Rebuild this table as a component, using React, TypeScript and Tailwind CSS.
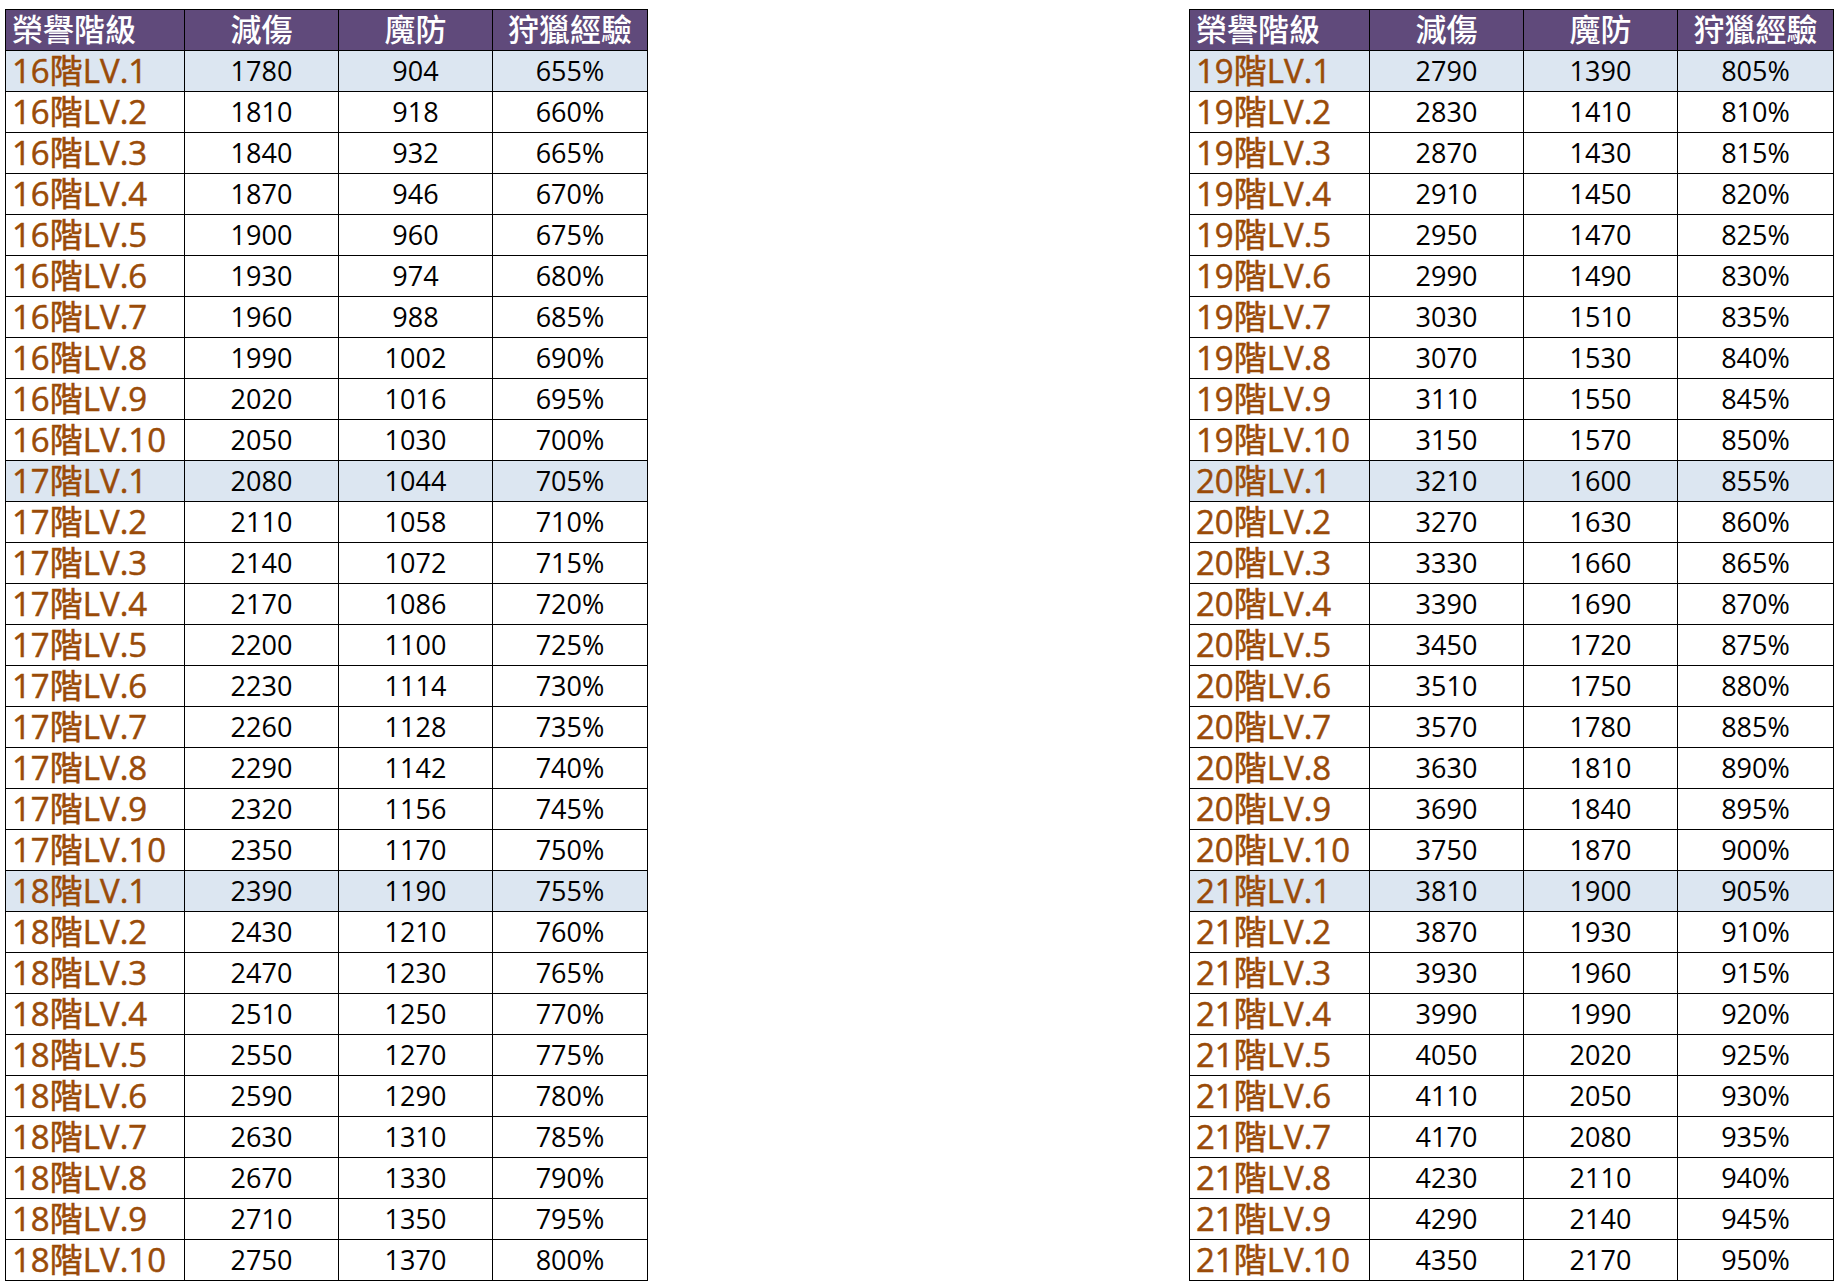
import React from 'react';

type Row = { label: string; dmg: number; mdef: number; exp: number; first: boolean };

// each tier: 10 levels, start values and steps
const buildTier = (tier: number, dmg: number, dmgStep: number, mdef: number, mdefStep: number, exp: number): Row[] =>
  Array.from({ length: 10 }, (_, i) => ({
    label: `${tier}階LV.${i + 1}`,
    dmg: dmg + dmgStep * i,
    mdef: mdef + mdefStep * i,
    exp: exp + 5 * i,
    first: i === 0,
  }));

const leftRows: Row[] = [
  ...buildTier(16, 1780, 30, 904, 14, 655),
  ...buildTier(17, 2080, 30, 1044, 14, 705),
  ...buildTier(18, 2390, 40, 1190, 20, 755),
];

const rightRows: Row[] = [
  ...buildTier(19, 2790, 40, 1390, 20, 805),
  ...buildTier(20, 3210, 60, 1600, 30, 855),
  ...buildTier(21, 3810, 60, 1900, 30, 905),
];

const font = { fontFamily: '"Open Sans", "Noto Sans CJK TC", sans-serif' };

const RankTable: React.FC<{ rows: Row[]; cols: string }> = ({ rows, cols }) => (
  <div className={`grid ${cols} auto-rows-[40px] gap-px bg-black border border-black`} style={font}>
    <div className="bg-[#604a7b] text-white text-[31px] font-medium flex items-center pl-[6px] pb-[2px] leading-none">榮譽階級</div>
    <div className="bg-[#604a7b] text-white text-[31px] font-medium flex items-center justify-center pb-[2px] leading-none">減傷</div>
    <div className="bg-[#604a7b] text-white text-[31px] font-medium flex items-center justify-center pb-[2px] leading-none">魔防</div>
    <div className="bg-[#604a7b] text-white text-[31px] font-medium flex items-center justify-center pb-[2px] leading-none">狩獵經驗</div>
    {rows.map((r) => {
      const bg = r.first ? 'bg-[#dce6f1]' : 'bg-white';
      return (
        <React.Fragment key={r.label}>
          <div className={`${bg} text-[#9a4b08] text-[33px] [-webkit-text-stroke:0.5px_#9a4b08] flex items-center pl-[6px] pb-[2px] leading-none whitespace-nowrap`}>
            {r.label}
          </div>
          <div className={`${bg} text-black text-[27px] flex items-center justify-center pb-[2px] leading-none`}>{r.dmg}</div>
          <div className={`${bg} text-black text-[27px] flex items-center justify-center pb-[2px] leading-none`}>{r.mdef}</div>
          <div className={`${bg} text-black text-[27px] flex items-center justify-center pb-[2px] leading-none`}>{r.exp}%</div>
        </React.Fragment>
      );
    })}
  </div>
);

export default function App() {
  return (
    <div className="w-[1838px] h-[1283px] bg-white flex items-start pl-[5px] pt-[9px] gap-[541px]">
      <RankTable rows={leftRows} cols="grid-cols-[178px_153px_153px_154px]" />
      <RankTable rows={rightRows} cols="grid-cols-[179px_153px_153px_155px]" />
    </div>
  );
}
